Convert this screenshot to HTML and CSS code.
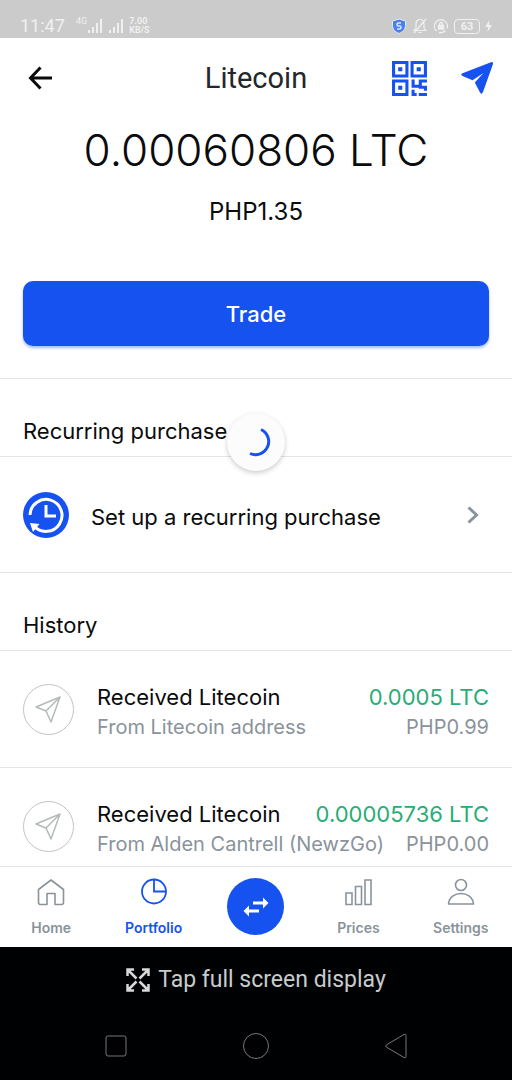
FILE: index.html
```html
<!DOCTYPE html>
<html lang="en">
<head>
<meta charset="utf-8">
<meta name="viewport" content="width=device-width, initial-scale=1">
<title>Litecoin</title>
<link rel="stylesheet" href="styles.css">
</head>
<body>
<div class="status-bar">
  <span class="clock">11:47</span>
  <span class="network">4G</span>
  <svg class="signal" width="16" height="14" viewBox="0 0 16 14" aria-hidden="true"><path d="M1 11h2v3H1zM5 8h2v6H5zM9 4h2v10H9zM13 0h2v14h-2z"/></svg>
  <svg class="signal" width="16" height="14" viewBox="0 0 16 14" aria-hidden="true"><path d="M1 11h2v3H1zM5 8h2v6H5zM9 4h2v10H9zM13 0h2v14h-2z"/></svg>
  <span class="speed"><span>7.00</span><span>KB/S</span></span>
  <span class="status-icons">
    <svg width="16" height="16" viewBox="0 0 16 16" aria-hidden="true"><path d="M8 1l6.500 2v4.500c0 4-3 6.500-6.500 8-3.500-1.500-6.500-4-6.500-8V3z" fill="#4a80ea" stroke="#e4ecfa"/><path d="M10 5H7.500a1.500 1.500 0 000 3h1a1.500 1.500 0 010 3H6" fill="none" stroke="#dfe9fc" stroke-width="1.500"/></svg>
    <svg width="16" height="16" viewBox="0 0 16 16" fill="none" stroke="#f0f0f0" stroke-width="1.200" aria-hidden="true"><path d="M2 12.500h12L12 10V6c0-6-8-6-8 0v4zM6.500 14.500h3M14 1L2 15"/></svg>
    <svg width="16" height="16" viewBox="0 0 16 16" fill="none" stroke="#f0f0f0" stroke-width="1.300" aria-hidden="true"><path d="M3.500 13A6.500 6.500 0 1114 10.500M12.500 12.500A6.500 6.500 0 016 14.500"/><path d="M6.500 7.500V6a1.500 1.500 0 013 0v1.500"/><path d="M5.500 7.500h5v3.500h-5z" fill="#f0f0f0"/></svg>
    <span class="battery">63</span>
    <svg width="7" height="14" viewBox="0 0 7 14" fill="#f0f0f0" aria-hidden="true"><path d="M4.500 1L0 8h3l-.5 5L7 6H4z"/></svg>
  </span>
</div>

<header class="top-bar">
  <button class="icon-button back" aria-label="Back">
    <svg width="24" height="24" viewBox="0 0 24 24" fill="none" stroke="#0a0b0d" stroke-width="3" aria-hidden="true"><path d="M12.500 1.500L2.500 12l10 10.500M3 12h21"/></svg>
  </button>
  <h1 class="coin-name">Litecoin</h1>
  <div class="top-actions">
    <button class="icon-button" aria-label="Show QR code">
      <svg width="37" height="37" viewBox="0 0 36 36" fill="#1652f0" fill-rule="evenodd" aria-hidden="true"><path d="M1 1h16v16H1zM4 4v10h10V4zM7 7h4v4H7zM19 1h16v16H19zM22 4v10h10V4zM25 7h4v4h-4zM1 19h16v16H1zM4 22v10h10V22zM7 25h4v4H7z"/><path d="M20 19h3v5h4v-5h8v3h-5v3h5v5h-3v-2h-5v-1h-7zM20 29h3v3h2v3h-5zM27 32h8v3h-8z"/></svg>
    </button>
    <button class="icon-button" aria-label="Send">
      <svg width="34" height="34" viewBox="0 0 34 34" fill="#1652f0" aria-hidden="true"><path d="M31 1.200Q33.500.2 33 3L23 31Q21.500 34 20 31.500L14.800 21.500 23.500 12 12.500 19.200 2.500 15Q0 13.500 2.500 12.300z"/></svg>
    </button>
  </div>
</header>

<main class="content">
  <section class="balance">
    <p class="amount">0.00060806 LTC</p>
    <p class="fiat">PHP1.35</p>
    <button class="trade">Trade</button>
  </section>

  <section>
    <h2 class="section-title">Recurring purchase</h2>
    <a class="recurring" href="#recurring">
      <svg width="46" height="46" viewBox="0 0 46 46" fill="none" aria-hidden="true"><circle cx="23" cy="23" r="23" fill="#1652f0"/><path d="M7 23A16 16 0 1111 34" stroke="#fff" stroke-width="3"/><path d="M7 31l9.500 1-6.500 8z" fill="#fff"/><path d="M23 13v11h10" stroke="#fff" stroke-width="3"/></svg>
      <span class="recurring-label">Set up a recurring purchase</span>
      <svg width="12" height="18" viewBox="0 0 12 18" fill="none" stroke="#8a939b" stroke-width="3" aria-hidden="true"><path d="M1.500 1.500L9.500 9l-8 7.500"/></svg>
    </a>
  </section>

  <section>
    <h2 class="section-title">History</h2>
    <ul class="history">
      <li class="entry">
        <span class="entry-icon"><svg width="28" height="28" viewBox="0 0 28 28" fill="none" stroke="#b3bab9" stroke-width="1.500" stroke-linejoin="round" aria-hidden="true"><path d="M25 2L1 12l10 4 5 11zM25 2L11 16"/></svg></span>
        <div class="entry-text"><p class="entry-title">Received Litecoin</p><p class="entry-note">From Litecoin address</p></div>
        <div class="entry-value"><p class="entry-title gain">0.0005 LTC</p><p class="entry-note">PHP0.99</p></div>
      </li>
      <li class="entry">
        <span class="entry-icon"><svg width="28" height="28" viewBox="0 0 28 28" fill="none" stroke="#b3bab9" stroke-width="1.500" stroke-linejoin="round" aria-hidden="true"><path d="M25 2L1 12l10 4 5 11zM25 2L11 16"/></svg></span>
        <div class="entry-text"><p class="entry-title">Received Litecoin</p><p class="entry-note">From Alden Cantrell (NewzGo)</p></div>
        <div class="entry-value"><p class="entry-title gain">0.00005736 LTC</p><p class="entry-note">PHP0.00</p></div>
      </li>
    </ul>
  </section>

  <div class="loader" role="status" aria-label="Loading">
    <svg width="30" height="30" viewBox="0 0 30 30" fill="none" stroke="#1652f0" stroke-width="3" aria-hidden="true"><path d="M20 2.500A13 13 0 0 1 9 26.500"/></svg>
  </div>
</main>

<nav class="tabs">
  <a class="tab" href="#home">
    <svg width="28" height="28" viewBox="0 0 28 28" fill="none" stroke="#8a939b" stroke-width="1.600" stroke-linejoin="round" aria-hidden="true"><path d="M14 2L26.500 11.500V24.500q0 2-2 2H18V15.500H10V26.500H3.500q-2 0-2-2V11.500z"/></svg>
    <span>Home</span>
  </a>
  <a class="tab active" href="#portfolio">
    <svg width="28" height="28" viewBox="0 0 28 28" fill="none" stroke="#1652f0" stroke-width="1.800" aria-hidden="true"><circle cx="14" cy="13.500" r="12"/><path d="M14 1.500v12h12"/></svg>
    <span>Portfolio</span>
  </a>
  <button class="swap" aria-label="Trade">
    <svg width="26" height="20" viewBox="0 0 26 20" aria-hidden="true"><path d="M10 6h11M5 14h11" stroke="#fff" stroke-width="3"/><path d="M20 .5L25.500 6 20 11.500zM6 8.500L.5 14 6 19.500z" fill="#fff"/></svg>
  </button>
  <a class="tab" href="#prices">
    <svg width="28" height="28" viewBox="0 0 28 28" fill="none" stroke="#8a939b" stroke-width="1.600" aria-hidden="true"><path d="M2 15h6v11.500H2zM11.500 8.500h6v18h-6zM21 2h6v24.500h-6z"/></svg>
    <span>Prices</span>
  </a>
  <a class="tab" href="#settings">
    <svg width="28" height="28" viewBox="0 0 28 28" fill="none" stroke="#8a939b" stroke-width="1.600" stroke-linejoin="round" aria-hidden="true"><circle cx="14" cy="7" r="5.500"/><path d="M1.500 26C2.500 12 25.500 12 26.500 26z"/></svg>
    <span>Settings</span>
  </a>
</nav>

<footer class="system">
  <button class="fullscreen">
    <svg width="24" height="24" viewBox="0 0 24 24" fill="none" stroke="#d8d8d8" stroke-width="2.500" aria-hidden="true"><path d="M1.500 8V1.500H8M16 1.500h6.500V8M22.500 16v6.500H16M8 22.500H1.500V16M2 2l8.500 8.500M22 2l-8.500 8.500M22 22l-8.500-8.500M2 22l8.500-8.500"/></svg>
    <span>Tap full screen display</span>
  </button>
  <div class="system-keys">
    <button class="icon-button" aria-label="Recent apps"><svg width="28" height="28" viewBox="0 0 28 28" fill="none" stroke="#777"><rect x="4" y="4" width="20" height="20" rx="2"/></svg></button>
    <button class="icon-button" aria-label="Home screen"><svg width="28" height="28" viewBox="0 0 28 28" fill="none" stroke="#777"><circle cx="14" cy="14" r="12.500"/></svg></button>
    <button class="icon-button" aria-label="System back"><svg width="28" height="28" viewBox="0 0 28 28" fill="none" stroke="#777" stroke-linejoin="round"><path d="M24 3.500q0-2-2-1L4.500 12.800q-1.500 1.200 0 2.400L22 25.500q2 1 2-1z"/></svg></button>
  </div>
</footer>
</body>
</html>
```
FILE: styles.css
```css
* {
  box-sizing: border-box;
  margin: 0;
  padding: 0;
}

body {
  display: flex;
  flex-direction: column;
  height: 100vh;
  background: #fff;
  color: #0a0b0d;
  font-family: Inter, "Liberation Sans", sans-serif;
}

button {
  border: 0;
  background: none;
  font: inherit;
  color: inherit;
}

a {
  color: inherit;
  text-decoration: none;
}

svg {
  display: block;
  flex: none;
}

.icon-button {
  display: flex;
}

.status-bar {
  display: flex;
  flex: none;
  align-items: center;
  height: 38px;
  padding: 14px 20px 0;
  background: #cbcbcb;
  color: #f0f0f0;
  font-family: Roboto, sans-serif;
}

.clock {
  width: 56px;
  font-size: 18px;
  line-height: 24px;
}

.network {
  align-self: flex-start;
  font-size: 9px;
  line-height: 14px;
}

.signal {
  margin-right: 5px;
  fill: #f0f0f0;
}

.speed {
  display: flex;
  flex-direction: column;
  font-size: 9px;
  font-weight: 700;
  line-height: 9px;
}

.status-icons {
  display: flex;
  align-items: center;
  gap: 5px;
  margin-left: auto;
}

.battery {
  width: 26px;
  border: 1px solid #f0f0f0;
  border-radius: 4px;
  font-size: 11px;
  font-weight: 700;
  line-height: 13px;
  text-align: center;
}

.top-bar {
  display: grid;
  flex: none;
  grid-template-columns: 1fr auto 1fr;
  align-items: center;
  height: 80px;
  padding: 0 18px;
}

.back {
  padding-left: 10px;
}

.coin-name {
  color: #23272b;
  font-family: Roboto, sans-serif;
  font-size: 29px;
  font-weight: 400;
}

.top-actions {
  display: flex;
  align-items: center;
  justify-content: flex-end;
  gap: 32px;
}

.content {
  position: relative;
  flex: 1;
  min-height: 0;
  overflow: hidden;
}

.balance {
  display: flex;
  flex-direction: column;
  align-items: center;
  padding: 4px 23px 32px;
}

.amount {
  font-size: 44px;
  font-weight: 300;
  line-height: 56px;
}

.fiat {
  margin: 18px 0 53px;
  font-size: 24px;
  line-height: 32px;
}

.trade {
  align-self: stretch;
  height: 65px;
  border-radius: 10px;
  background: #1652f0;
  box-shadow: 0 2px 3px #1652f066;
  color: #fff;
  font-size: 22px;
  font-weight: 500;
}

.section-title {
  padding: 36px 23px 9px;
  border-top: 1px solid #e4e5e6;
  border-bottom: 1px solid #e4e5e6;
  font-size: 22px;
  font-weight: 400;
  line-height: 32px;
}

.recurring {
  display: flex;
  align-items: center;
  height: 115px;
  padding: 0 33px 0 23px;
}

.recurring-label {
  flex: 1;
  padding: 4px 0 0 22px;
  font-size: 22px;
  line-height: 32px;
}

.history {
  list-style: none;
}

.entry {
  display: flex;
  align-items: center;
  height: 117px;
  padding: 0 23px;
  border-bottom: 1px solid #e4e5e6;
  white-space: nowrap;
}

.entry-icon {
  display: grid;
  flex: none;
  place-items: center;
  width: 51px;
  height: 51px;
  margin-right: 23px;
  border: 1px solid #bfc4c4;
  border-radius: 50%;
}

.entry-text {
  flex: 1;
  min-width: 0;
  padding-top: 4px;
}

.entry-value {
  padding-top: 4px;
  text-align: right;
}

.entry-title {
  font-size: 22px;
  line-height: 32px;
}

.entry-note {
  color: #8a939b;
  font-size: 20px;
  line-height: 28px;
}

.gain {
  color: #27ad75;
}

.loader {
  position: absolute;
  top: 295px;
  left: 50%;
  display: grid;
  place-items: center;
  width: 58px;
  height: 58px;
  margin-left: -29px;
  border-radius: 50%;
  background: #fcfcfc;
  box-shadow: 0 2px 5px #0003;
}

.tabs {
  display: grid;
  flex: none;
  grid-template-columns: repeat(5, 1fr);
  justify-items: center;
  height: 81px;
  padding-top: 11px;
  border-top: 1px solid #e4e5e6;
  color: #8a939b;
  font-size: 14px;
  font-weight: 600;
  line-height: 20px;
}

.tab {
  display: flex;
  flex-direction: column;
  align-items: center;
  gap: 12px;
}

.active {
  color: #1652f0;
}

.swap {
  display: grid;
  place-items: center;
  width: 57px;
  height: 57px;
  border-radius: 50%;
  background: #1652f0;
}

.system {
  flex: none;
  padding: 17px 0 20px;
  background: #000103;
  color: #c8cccc;
  font-family: Roboto, sans-serif;
}

.fullscreen {
  display: flex;
  align-items: center;
  gap: 8px;
  margin: 0 auto;
  font-size: 23px;
  line-height: 32px;
}

.system-keys {
  display: flex;
  justify-content: center;
  gap: 112px;
  padding-top: 36px;
}
```
